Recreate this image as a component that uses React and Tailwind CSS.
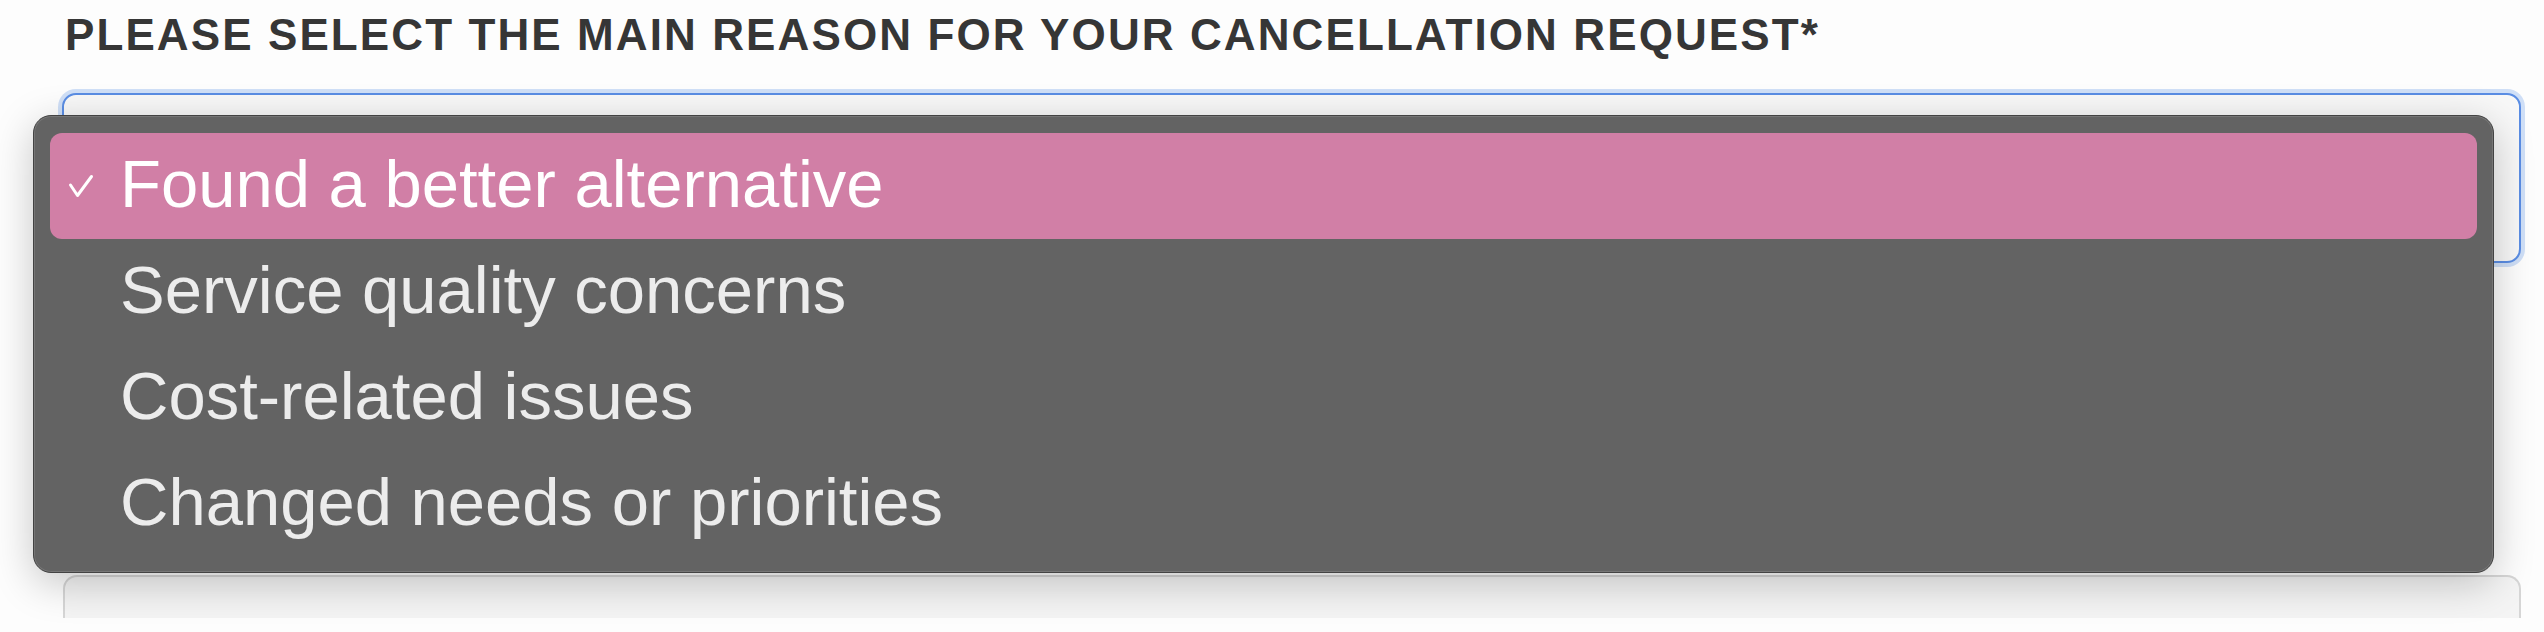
import { useState } from 'react';

const reasons = [
  'Found a better alternative',
  'Service quality concerns',
  'Cost-related issues',
  'Changed needs or priorities',
];

// Small check glyph drawn beside the selected option
function CheckMark() {
  return (
    <svg width="26" height="24" viewBox="0 0 26 24" fill="none" className="shrink-0">
      <path
        d="M2.5 11 L9.5 21.5 L23.5 2.5"
        stroke="currentColor"
        strokeWidth="3"
        strokeLinecap="round"
        strokeLinejoin="round"
      />
    </svg>
  );
}

function App() {
  const [selected, setSelected] = useState(reasons[0]);

  return (
    <div className="relative w-[2544px] h-[632px] overflow-hidden bg-[#fdfdfd] font-['Liberation_Sans',Arial,sans-serif]">
      {/* Field label */}
      <h2 className="pl-[65px] pt-[13px] text-[44px] leading-[44px] font-bold tracking-[2.1px] text-[#363636]">
        PLEASE SELECT THE MAIN REASON FOR YOUR CANCELLATION REQUEST*
      </h2>

      {/* Focused select box */}
      <div className="ml-[62px] mt-[36px] w-[2459px] h-[170px] rounded-[14px] border-[2.5px] border-[#5a8de4] bg-[#f8f8f8] shadow-[0_0_0_4px_rgba(120,165,235,0.35)]" />

      {/* Next field (mostly hidden behind the menu) */}
      <div className="ml-[63px] mt-[312px] w-[2458px] h-[43px] rounded-t-[14px] border-2 border-b-0 border-[#d6d6d6] bg-[#f4f4f4]" />

      {/* Open dropdown menu */}
      <ul className="absolute left-[33px] top-[115px] w-[2461px] h-[458px] rounded-[18px] border border-[#434343] bg-[#636363] px-[16px] py-[17px] shadow-[inset_0_0_0_1px_rgba(255,255,255,0.12),0_10px_40px_rgba(0,0,0,0.22)]">
        {reasons.map((reason) => {
          const isSelected = reason === selected;
          return (
            <li
              key={reason}
              onClick={() => setSelected(reason)}
              className={`flex items-center h-[106px] rounded-[12px] cursor-default ${
                isSelected ? 'bg-[#d17fa6] text-white' : 'text-[#ececec]'
              }`}
            >
              <span className="w-[70px] pl-[18px] flex items-center">
                {isSelected && <CheckMark />}
              </span>
              <span className="text-[67px] leading-[106px] -translate-y-[2px]">{reason}</span>
            </li>
          );
        })}
      </ul>
    </div>
  );
}

export default App;
